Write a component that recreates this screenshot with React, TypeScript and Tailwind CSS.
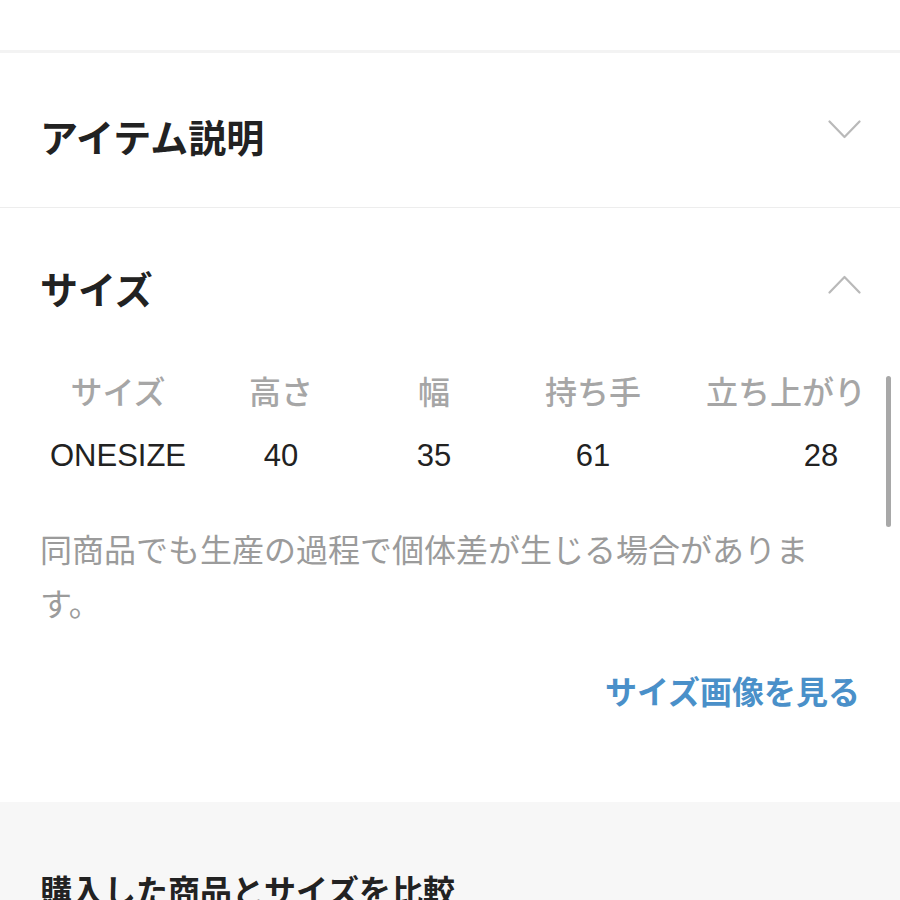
import React from "react";

const font = { fontFamily: '"Liberation Sans", "Noto Sans CJK JP", sans-serif' };

function Chevron({ up }: { up?: boolean }) {
  return (
    <svg width="33" height="19" viewBox="0 0 33 19" fill="none" className="shrink-0">
      <polyline
        points={up ? "1.5,17.5 16.5,2 31.5,17.5" : "1.5,1.5 16.5,17 31.5,1.5"}
        stroke="#b9b9b9"
        strokeWidth="2.2"
        strokeLinecap="round"
        strokeLinejoin="round"
      />
    </svg>
  );
}

export default function App() {
  const headers = ["サイズ", "高さ", "幅", "持ち手", "立ち上がり"];
  return (
    <div className="w-[900px] h-[900px] overflow-hidden bg-white relative" style={font}>
      <div className="h-[50px] bg-white" />
      <div className="h-[3px] bg-[#f3f3f3]" />

      {/* Section 1 */}
      <div className="pl-[40px] pr-[39px] pt-[67px] pb-[49px] flex justify-between items-start">
        <div className="text-[38px] leading-[38px] font-bold text-[#222222]">アイテム説明</div>
        <div className="mt-[0px]">
          <Chevron />
        </div>
      </div>
      <div className="h-px bg-[#ededed]" />

      {/* Section 2 */}
      <div className="pl-[40px] pr-[39px] pt-[64px] flex justify-between items-start">
        <div className="text-[38px] leading-[38px] font-bold text-[#222222]">サイズ</div>
        <div className="mt-[3px]">
          <Chevron up />
        </div>
      </div>

      <div className="pl-[40px] pt-[67px]">
        <div className="grid grid-cols-[156px_170px_136px_182px_204px] text-center">
          {headers.map((h) => (
            <div key={h} className="text-[32px] leading-[32px] font-medium text-[#a6a6a6] whitespace-nowrap">
              {h}
            </div>
          ))}
        </div>
        <div className="grid grid-cols-[156px_170px_136px_182px_204px] text-center mt-[31px] text-[31px] leading-[32px] text-[#222222]">
          <div>ONESIZE</div>
          <div>40</div>
          <div>35</div>
          <div>61</div>
          <div className="pl-[70px]">28</div>
        </div>
      </div>

      <div className="pl-[40px] pt-[52px] w-[830px]">
        <p className="text-[32px] leading-[54px] text-[#9b9b9b] max-w-[790px]">
          同商品でも生産の過程で個体差が生じる場合があります。
        </p>
      </div>

      <div className="pr-[40px] pt-[45px] pb-[93px] flex justify-end">
        <span className="text-[32px] leading-[32px] font-bold text-[#4a90c9]">サイズ画像を見る</span>
      </div>

      {/* Gray section */}
      <div className="bg-[#f7f7f7] pl-[40px] pt-[74px] h-[200px]">
        <div className="text-[32px] leading-[32px] font-bold text-[#222222] whitespace-nowrap">
          購入した商品とサイズを比較
        </div>
      </div>

      {/* scroll indicator */}
      <div className="absolute left-[886px] top-[376px] w-[5px] h-[151px] rounded-full bg-[#a8a8a8]" />
    </div>
  );
}
